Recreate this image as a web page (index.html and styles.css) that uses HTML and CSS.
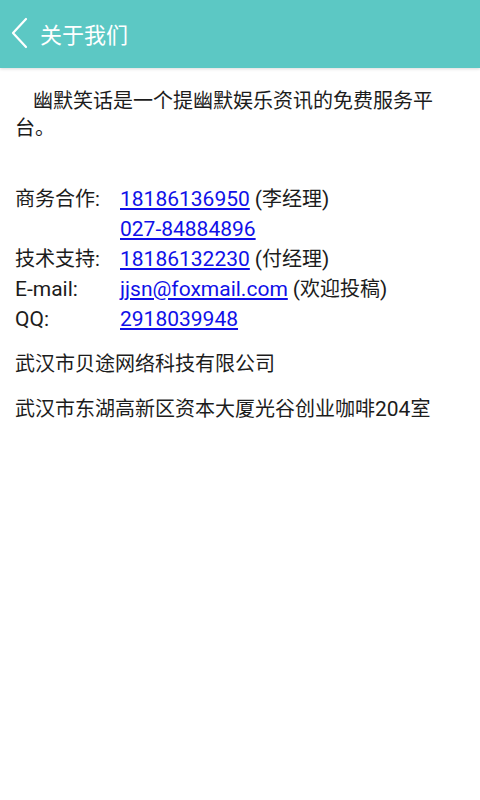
FILE: index.html
```html
<!DOCTYPE html>
<html lang="zh-CN">
<head>
  <meta charset="UTF-8" />
  <title>关于我们</title>
  <link rel="stylesheet" href="styles.css">
</head>
<body>

<header class="topbar">
  <svg class="back" width="20" height="32" viewBox="0 0 20 32">
    <polyline points="16,2 3,16 16,30" fill="none" stroke="#fff" stroke-width="2.2" stroke-linecap="round" stroke-linejoin="round"/>
  </svg>
  <h1>关于我们</h1>
</header>

<div class="content">
  <p class="intro">幽默笑话是一个提幽默娱乐资讯的免费服务平台。</p>

  <div class="contact">
    <span class="label">商务合作:</span>
    <span><a href="#">18186136950</a> <span class="en">(</span>李经理<span class="en">)</span></span>
    <span class="label"></span>
    <span><a href="#">027-84884896</a></span>
    <span class="label">技术支持:</span>
    <span><a href="#">18186132230</a> <span class="en">(</span>付经理<span class="en">)</span></span>
    <span class="label en">E-mail:</span>
    <span><a href="#">jjsn@foxmail.com</a> <span class="en">(</span>欢迎投稿<span class="en">)</span></span>
    <span class="label en">QQ:</span>
    <span><a href="#">2918039948</a></span>
  </div>

  <p class="line">武汉市贝途网络科技有限公司</p>
  <p class="line">武汉市东湖高新区资本大厦光谷创业咖啡<span class="en">204</span>室</p>
</div>

</body>
</html>
```

FILE: styles.css
```css
body {
  font-family: Roboto, "Noto Sans CJK SC", sans-serif;
  background-color: #fff;
  color: #1c1c1c;
  margin: 0;
  padding: 0;
}
.topbar {
  height: 68px;
  box-sizing: border-box;
  background-color: #5cc8c4;
  display: flex;
  align-items: center;
  padding: 0 0 3px 10px;
  box-shadow: 0 1px 3px rgba(0, 0, 0, 0.15);
}
.back {
  margin-right: 10px;
}
.topbar h1 {
  margin: 0;
  color: #fff;
  font-size: 22px;
  font-weight: normal;
}
.content {
  padding: 20px 15px;
  font-size: 20px;
}
.en {
  font-size: 21px;
}
.intro {
  margin: 0;
  line-height: 27px;
  text-indent: 18px;
}
.contact {
  display: grid;
  grid-template-columns: 105px auto;
  line-height: 30px;
  margin-top: 42px;
}
.contact a {
  color: #1010e8;
  font-size: 21px;
}
.line {
  margin: 15px 0 0;
  line-height: 30px;
}
```
